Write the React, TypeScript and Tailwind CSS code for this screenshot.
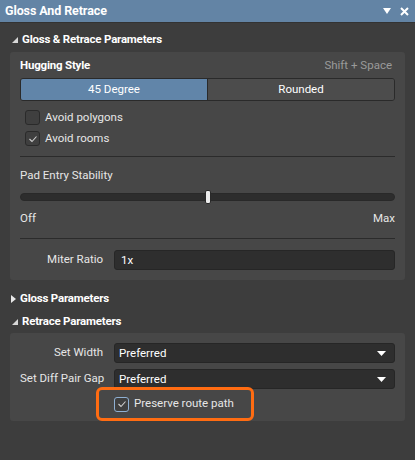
import React, { useState } from 'react';

const Tri: React.FC<{ open?: boolean }> = ({ open }) =>
  open ? (
    <svg className="w-[6px] h-[6px]" viewBox="0 0 6 6">
      <path d="M6 0 L6 6 L0 6 Z" fill="#d8d8d8" />
    </svg>
  ) : (
    <svg className="w-[5px] h-[8px]" viewBox="0 0 5 8">
      <path d="M0 0 L5 4 L0 8 Z" fill="#e8e8e8" />
    </svg>
  );

const Check: React.FC<{ checked?: boolean; accent?: boolean }> = ({ checked, accent }) => (
  <span
    className={`w-[15px] h-[15px] rounded-[3px] border flex items-center justify-center bg-[#3f3f3f] ${
      accent ? 'border-[#8fb0d3]' : 'border-[#2a2a2a]'
    }`}
  >
    {checked && (
      <svg className="w-[10px] h-[10px]" viewBox="0 0 10 10" fill="none">
        <path d="M1.5 5 L4 7.5 L8.5 2.5" stroke="#d0d0d0" strokeWidth="1.1" />
      </svg>
    )}
  </span>
);

const Caret = () => (
  <svg className="w-[9px] h-[5px]" viewBox="0 0 9 5">
    <path d="M0 0 H9 L4.5 5 Z" fill="#ffffff" />
  </svg>
);

const Select: React.FC<{ value: string }> = ({ value }) => (
  <div className="flex-1 h-[20px] rounded-[3px] bg-[#2e2e2e] border border-[#262626] flex items-center justify-between pl-[4px] pr-[8px] text-white">
    <span className="pt-[1px]">{value}</span>
    <Caret />
  </div>
);

export default function App() {
  const [style, setStyle] = useState<'45' | 'round'>('45');
  const [polys, setPolys] = useState(false);
  const [rooms, setRooms] = useState(true);

  return (
    <div
      className="w-[415px] h-[460px] bg-[#3d3d3d] text-[11.5px] text-[#e6e6e6] flex flex-col"
      style={{ fontFamily: 'Roboto, "Noto Sans", sans-serif' }}
    >
      {/* title bar */}
      <div className="h-[23px] bg-[#6384a5] border-b border-[#333] flex items-center pl-[5px] pr-[6px]">
        <span className="flex-1 font-bold text-[12.5px] tracking-[-0.1px] text-white">Gloss And Retrace</span>
        <div className="flex items-center gap-[9px]">
          <svg className="w-[8px] h-[6px]" viewBox="0 0 8 6">
            <path d="M0 0 H8 L4 6 Z" fill="#fff" />
          </svg>
          <svg className="w-[9px] h-[9px]" viewBox="0 0 9 9">
            <path d="M1 1 L8 8 M8 1 L1 8" stroke="#fff" strokeWidth="2" />
          </svg>
        </div>
      </div>

      <div className="flex-1 pl-[10px] pr-[10px]">
        {/* Gloss & Retrace Parameters */}
        <div className="h-[29px] flex items-center gap-[4px] pl-[2px] pt-[5px]">
          <Tri open />
          <span className="font-bold tracking-[-0.2px] text-white">Gloss &amp; Retrace Parameters</span>
        </div>

        <div className="rounded-[3px] bg-[#474747] px-[10px] pt-[4px] pb-[10px]">
          <div className="flex items-center justify-between h-[20px]">
            <span className="font-bold tracking-[-0.2px] text-white">Hugging Style</span>
            <span className="text-[#9a9a9a] pr-[3px]">Shift + Space</span>
          </div>
          <div className="mt-[2px] h-[23px] flex rounded-[3px] border border-[#2a2a2a] overflow-hidden">
            <button
              onClick={() => setStyle('45')}
              className={`flex-1 border-r border-[#2a2a2a] ${style === '45' ? 'bg-[#6185a9] text-white' : 'bg-[#4c4c4c] text-white'}`}
            >
              45 Degree
            </button>
            <button
              onClick={() => setStyle('round')}
              className={`flex-1 ${style === 'round' ? 'bg-[#6185a9] text-white' : 'bg-[#4c4c4c] text-white'}`}
            >
              Rounded
            </button>
          </div>

          <div className="pl-[5px] mt-[9px] flex flex-col gap-[6px]">
            <label className="flex items-center gap-[5px] h-[15px] cursor-pointer" onClick={() => setPolys(!polys)}>
              <Check checked={polys} />
              <span>Avoid polygons</span>
            </label>
            <label className="flex items-center gap-[5px] h-[15px] cursor-pointer" onClick={() => setRooms(!rooms)}>
              <Check checked={rooms} />
              <span>Avoid rooms</span>
            </label>
          </div>

          <div className="mt-[10px] h-px bg-[#2b2b2b]" />

          <div className="mt-[11px] h-[16px] flex items-center">Pad Entry Stability</div>
          <div className="relative mt-[9px] h-[8px] rounded-full bg-[#2d2d2d] border border-[#292929]">
            <div className="absolute left-[184px] top-[-4px] w-[6px] h-[14px] rounded-[2px] bg-[#ececec] border border-[#2a2a2a]" />
          </div>
          <div className="mt-[10px] flex justify-between h-[16px] items-center">
            <span>Off</span>
            <span>Max</span>
          </div>

          <div className="mt-[11px] h-px bg-[#2b2b2b]" />

          <div className="mt-[11px] flex items-center gap-[11px]">
            <span className="w-[83px] text-right">Miter Ratio</span>
            <div className="flex-1 h-[20px] rounded-[3px] bg-[#2e2e2e] border border-[#262626] flex items-center pl-[6px] pt-[2px] text-white">
              1x
            </div>
          </div>
        </div>

        {/* Gloss Parameters */}
        <div className="mt-[7px] h-[23px] flex items-center gap-[4px] pl-[1px]">
          <Tri />
          <span className="font-bold tracking-[-0.2px] text-white">Gloss Parameters</span>
        </div>
        {/* Retrace Parameters */}
        <div className="h-[23px] flex items-center gap-[4px] pl-[2px]">
          <Tri open />
          <span className="font-bold tracking-[-0.2px] text-white">Retrace Parameters</span>
        </div>

        <div className="rounded-[3px] bg-[#474747] px-[10px] pt-[10px]">
          <div className="flex items-center gap-[11px]">
            <span className="w-[83px] text-right">Set Width</span>
            <Select value="Preferred" />
          </div>
          <div className="mt-[6px] flex items-center gap-[11px]">
            <span className="w-[83px] text-right whitespace-nowrap">Set Diff Pair Gap</span>
            <Select value="Preferred" />
          </div>
          <div className="flex">
            <div className="ml-[76px] -mt-[2px] border-[3px] border-[#ff6c12] rounded-[6px] h-[34px] w-[158px] flex items-center pl-[15px] gap-[5px]">
              <Check checked accent />
              <span>Preserve route path</span>
            </div>
          </div>
        </div>
      </div>
    </div>
  );
}
